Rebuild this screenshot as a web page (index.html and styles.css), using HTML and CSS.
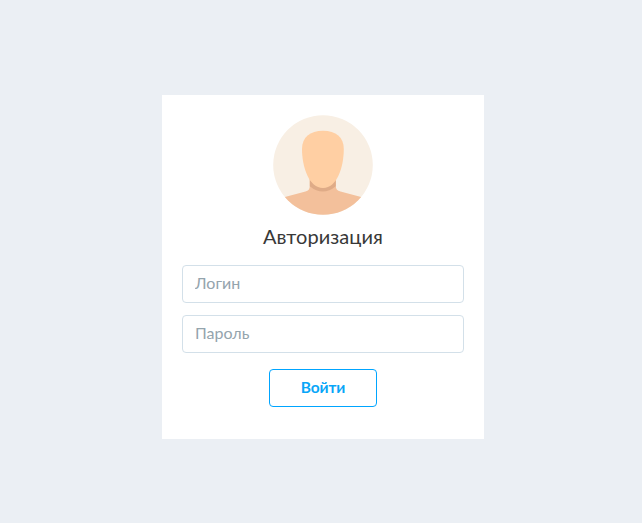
FILE: index.html
```html
<!DOCTYPE html>
<html lang="ru">
<head>
<meta charset="utf-8">
<title>Авторизация</title>
<link rel="stylesheet" href="styles.css">
</head>
<body>
<form class="card">
  <svg class="avatar" viewBox="0 0 100 100" aria-hidden="true">
    <defs><clipPath id="round"><circle cx="50" cy="50" r="49.800"/></clipPath></defs>
    <g clip-path="url(#round)">
      <rect width="100" height="100" fill="#f8efe4"/>
      <path d="M36.800 60V71Q36.800 75.500 32.500 76.500L10 82.500V100H90V82.500L67.500 76.500Q62.800 75.500 62.800 71V60Z" fill="#f3c09b"/>
      <path d="M36.800 60V71.200Q49.800 82 62.800 71.200V60Z" fill="#dfab87"/>
      <path d="M50 15.700C63 15.700 70.800 22 70.800 34C70.800 52 64 73 50 73C36 73 29 52 29 34C29 22 37 15.700 50 15.700Z" fill="#ffcfa3"/>
    </g>
  </svg>
  <h1 class="title">Авторизация</h1>
  <input class="field" type="text" placeholder="Логин">
  <input class="field password" type="password" placeholder="Пароль">
  <button class="submit" type="button">Войти</button>
</form>
</body>
</html>
```

FILE: styles.css
```css
* { box-sizing: border-box; }
body {
  margin: 0;
  padding: 95px 0 0 162px;
  min-height: 523px;
  background: #ebeff4;
  font-family: Lato, Inter, sans-serif;
}
.card {
  display: flex;
  flex-direction: column;
  align-items: center;
  width: 322px;
  height: 344px;
  padding: 20px;
  background: #fff;
}
.avatar { display: block; width: 100px; height: 100px; flex: none; }
.title {
  margin: 6px 0 14px;
  height: 30px;
  line-height: 30px;
  font-size: 20px;
  font-weight: 400;
  letter-spacing: 0.05px;
  color: #383838;
}
.field {
  width: 100%;
  height: 38px;
  margin: 0 0 12px;
  padding: 0 12px 3px;
  border: 1px solid #d3e0e9;
  border-radius: 4px;
  background: #fff;
  font: 400 16px Lato, Inter, sans-serif;
  outline: none;
}
.field::placeholder { color: #94a4ad; opacity: 1; }
.password { margin-bottom: 16px; }
.submit {
  width: 108px;
  height: 38px;
  padding: 0 0 3px;
  border: 1px solid #00a5ff;
  border-radius: 4px;
  background: #fff;
  color: #08a6f8;
  font: 700 15.5px Lato, Inter, sans-serif;
  letter-spacing: -0.1px;
}
```
